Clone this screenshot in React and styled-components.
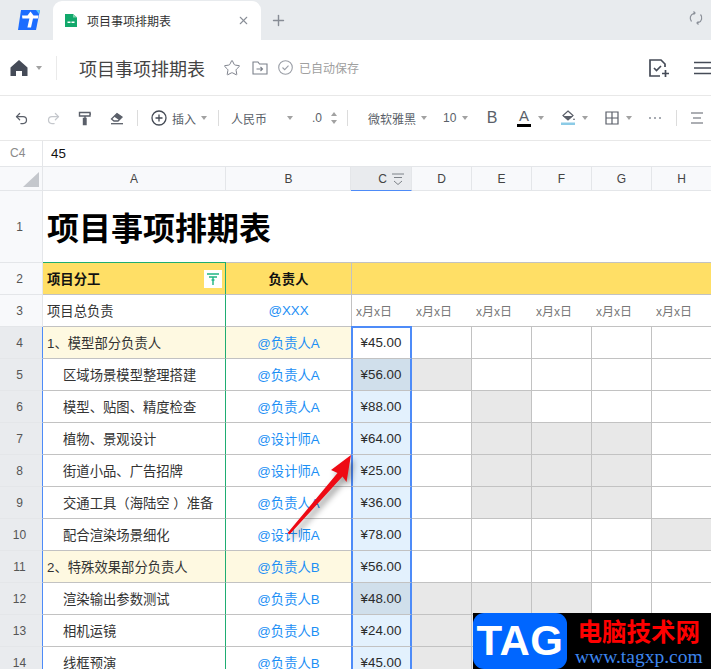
import React from 'react';
import styled, { createGlobalStyle } from 'styled-components';
import { Star, X, Plus, Undo2, Redo2 } from 'lucide-react';

const GlobalStyle = createGlobalStyle`
  html, body { margin: 0; padding: 0; background: #fff; }
  body { font-family: "Liberation Sans", "Noto Sans CJK SC", sans-serif; }
  * { box-sizing: border-box; }
`;

const Page = styled.div`
  position: relative;
  width: 711px;
  height: 669px;
  overflow: hidden;
  background: #fff;
`;

/* tab strip */
const TabStrip = styled.div`
  display: flex;
  align-items: flex-end;
  height: 40px;
  padding-left: 17px;
  background: #e8ebee;
`;
const Logo = styled.svg`
  align-self: center;
  width: 24px;
  height: 22px;
  margin-right: 12px;
  flex: none;
`;
const Tab = styled.div`
  display: flex;
  align-items: center;
  width: 208px;
  height: 39px;
  padding: 0 11px;
  gap: 9px;
  background: #fff;
  border-radius: 9px 9px 0 0;
  font-size: 12px;
  color: #333;
`;
const TabTitle = styled.span`
  flex: 1;
`;
const NewTab = styled.div`
  display: flex;
  align-self: center;
  margin-left: 9px;
  color: #878c95;
`;
const SyncIcon = styled.svg`
  align-self: center;
  margin-left: auto;
  margin-right: 8px;
  margin-top: -4px;
`;

/* document header */
const DocHeader = styled.div`
  display: flex;
  align-items: center;
  height: 56px;
  padding-left: 10px;
  border-bottom: 1px solid #e8e8e8;
`;
const HeadDivider = styled.div`
  width: 1px;
  height: 24px;
  margin: 0 22px 0 14px;
  background: #eaeaea;
`;
const DocTitle = styled.div`
  font-size: 18px;
  color: #444;
  margin-right: 18px;
`;
const SavedText = styled.span`
  font-size: 12px;
  color: #a0a0a0;
  margin-left: 6px;
`;
const HeadIcon = styled.svg`
  flex: none;
  margin-right: ${p => p.$gap || 0}px;
  margin-left: ${p => p.$left || 0}px;
`;

/* toolbar */
const Toolbar = styled.div`
  display: flex;
  align-items: center;
  height: 44px;
  padding-left: 5px;
  font-size: 12px;
  color: #444;
`;
const ToolButton = styled.div`
  display: flex;
  align-items: center;
  justify-content: ${p => (p.$start ? 'flex-start' : 'center')};
  flex: none;
  width: ${p => p.$w || 32}px;
  height: 24px;
  padding-left: ${p => p.$pad || 0}px;
  gap: ${p => p.$gap || 0}px;
  color: ${p => p.$color || '#5a5f69'};
`;
const ToolDivider = styled.div`
  flex: none;
  width: 1px;
  height: 16px;
  margin: 0 ${p => p.$m ?? 4}px;
  background: #dcdcdc;
`;
const Caret = styled.i`
  flex: none;
  width: 0;
  height: 0;
  margin-left: ${p => p.$left || 0}px;
  border-left: 3.5px solid transparent;
  border-right: 3.5px solid transparent;
  border-top: 4px solid #a2a2a2;
`;
const Stepper = styled.div`
  display: flex;
  flex-direction: column;
  gap: 4px;
  margin-left: 9px;
`;
const StepUp = styled.i`
  border-left: 3.5px solid transparent;
  border-right: 3.5px solid transparent;
  border-bottom: 4px solid #a2a2a2;
`;
const StepDown = styled.i`
  border-left: 3.5px solid transparent;
  border-right: 3.5px solid transparent;
  border-top: 4px solid #a2a2a2;
`;
const BoldMark = styled.span`
  font-size: 16px;
  color: #5a5f69;
`;
const ColorMark = styled.div`
  display: flex;
  flex-direction: column;
  align-items: center;
  width: 14px;
  font-size: 15px;
  line-height: 14px;
  color: #5a5f69;
  &::after {
    content: '';
    width: 14px;
    height: 3px;
    margin-top: 1px;
    background: ${p => p.$bar};
  }
`;

/* formula bar */
const FormulaBar = styled.div`
  display: flex;
  align-items: center;
  height: 27px;
  border-top: 1px solid #e8e8e8;
  border-bottom: 1px solid #e4e6e9;
`;
const CellRef = styled.div`
  width: 43px;
  height: 100%;
  padding-left: 10px;
  border-right: 1px solid #e4e6e9;
  font-size: 12px;
  line-height: 25px;
  color: #8a8a8a;
`;
const FormulaValue = styled.div`
  padding-left: 8px;
  font-size: 13.33px;
  color: #111;
`;

/* sheet */
const Row = styled.div`
  display: grid;
  grid-template-columns: 43px 183px 125px 61px repeat(5, 60px);
  height: ${p => p.$h || 32}px;
`;
const Corner = styled.div`
  display: flex;
  align-items: flex-end;
  justify-content: flex-end;
  padding: 0 3px 3px 0;
  background: #f8f9fb;
  border-right: 1px solid #e4e6e9;
  border-bottom: 1px solid #e4e6e9;
`;
const ColHead = styled.div`
  display: flex;
  align-items: center;
  justify-content: center;
  gap: 4px;
  font-size: 12px;
  color: #444;
  background: ${p => (p.$active ? '#e9ebee' : '#f8f9fb')};
  border-right: 1px solid #e4e6e9;
  border-bottom: ${p => (p.$active ? '1px solid #4d8bf8' : '1px solid #e4e6e9')};
  padding-left: ${p => p.$pad || 0}px;
`;
const RowHead = styled.div`
  display: flex;
  align-items: center;
  justify-content: center;
  padding-right: 3px;
  font-size: 12px;
  color: #555;
  background: ${p => (p.$active ? '#e9ebee' : '#f8f9fb')};
  border-right: 1px solid ${p => (p.$active ? '#4d8bf8' : '#e4e6e9')};
  border-bottom: 1px solid #e4e6e9;
`;
const TitleCell = styled.div`
  display: flex;
  align-items: center;
  padding: 0 0 2px 4px;
  font-size: 32px;
  font-weight: 700;
  color: #000;
  white-space: nowrap;
  border-bottom: 1px solid #1fad72;
`;
const TitleRest = styled.div`
  grid-column: 3 / -1;
  border-bottom: 1px solid #c2c2c2;
`;
const NameCell = styled.div`
  display: flex;
  align-items: center;
  justify-content: space-between;
  padding-left: ${p => (p.$indent ? 20 : 4)}px;
  padding-right: 3px;
  font-size: 13.33px;
  font-weight: ${p => (p.$bold ? 700 : 400)};
  color: ${p => (p.$bold ? '#111' : '#333')};
  white-space: nowrap;
  background: ${p => p.$bg || '#fff'};
  border-right: 1px solid #1fad72;
  border-bottom: 1px solid #c2c2c2;
`;
const OwnerCell = styled.div`
  display: flex;
  align-items: center;
  justify-content: center;
  font-size: 13.33px;
  font-weight: ${p => (p.$bold ? 700 : 400)};
  color: ${p => (p.$bold ? '#111' : '#1c8ff5')};
  background: ${p => p.$bg || '#fff'};
  border-bottom: 1px solid #c2c2c2;
`;
const BandCell = styled.div`
  grid-column: 4 / -1;
  background: #ffdf66;
  border-left: 1px solid #c2c2c2;
  border-bottom: 1px solid #c2c2c2;
`;
const DateCell = styled.div`
  display: flex;
  align-items: center;
  padding-left: 4px;
  font-size: 12px;
  color: #777;
  white-space: nowrap;
  border-left: ${p => (p.$first ? '1px solid #c2c2c2' : 'none')};
  border-bottom: 1px solid #c2c2c2;
`;
const AmountCell = styled.div`
  display: flex;
  align-items: center;
  justify-content: center;
  padding-right: 1px;
  font-size: 13.33px;
  color: #2b2b2b;
  background: ${p => (p.$current ? '#fff' : p.$dark ? '#d0dfeb' : '#e3f1fd')};
  border-left: 2px solid #4d8bf8;
  border-right: 2px solid #4d8bf8;
  border-bottom: 1px solid #c2c2c2;
  box-shadow: ${p => (p.$current ? 'inset 0 2px 0 #4d8bf8' : 'none')};
  margin-top: ${p => (p.$current ? -1 : 0)}px;
`;
const DayCell = styled.div`
  background: ${p => (p.$on ? '#e8e8e8' : '#fff')};
  border-right: 1px solid #c2c2c2;
  border-bottom: 1px solid #c2c2c2;
`;
const FilterButton = styled.div`
  display: flex;
  align-items: center;
  justify-content: center;
  width: 18px;
  height: 18px;
  background: #fff;
`;

/* annotation drawn over the sheet */
const ArrowMark = styled.svg`
  position: absolute;
  left: 270px;
  top: 445px;
  filter: drop-shadow(3px 4px 3px rgba(0, 0, 0, 0.4));
`;
const Watermark = styled.div`
  position: absolute;
  left: 473px;
  top: 613px;
  display: flex;
  width: 238px;
  height: 56px;
  background: #000;
`;
const WatermarkBadge = styled.div`
  display: flex;
  align-items: center;
  justify-content: center;
  width: 94px;
  height: 56px;
  border-radius: 11px;
  background: #0066ff;
  color: #fff;
  font-size: 42px;
  font-weight: 700;
  letter-spacing: 0.5px;
`;
const WatermarkText = styled.div`
  display: flex;
  flex-direction: column;
  align-items: center;
  padding-left: 8px;
`;
const WatermarkName = styled.div`
  margin-top: 2px;
  font-family: "Noto Sans CJK SC", sans-serif;
  font-size: 24.5px;
  line-height: 32px;
  font-weight: 700;
  color: #f00;
`;
const WatermarkUrl = styled.div`
  font-family: "Liberation Serif", serif;
  font-size: 19.5px;
  line-height: 20px;
  color: #3d86ee;
`;

const Roller = () => (
  <svg width="16" height="16" viewBox="0 0 16 16" fill="none" stroke="currentColor" strokeWidth="1.4">
    <path d="M2.5 2.5h10.500v3.500h-10.500z" />
    <path d="M13 4h1v0M8 6v2" />
    <path d="M6.500 8.500h2.500v6h-2.500z" fill="currentColor" />
  </svg>
);
const Eraser = () => (
  <svg width="16" height="16" viewBox="0 0 16 16" fill="none">
    <path d="M2.500 9l5.500-5.500 5 3.500-4 4h-4z" stroke="currentColor" strokeWidth="1.300" />
    <path d="M8 3.500l5 3.500-3 3-5-3.500z" fill="currentColor" />
    <path d="M2 13.700h12" stroke="currentColor" strokeWidth="1.300" />
  </svg>
);
const PlusCircle = () => (
  <svg width="16" height="16" viewBox="0 0 16 16" fill="none" stroke="#444a55" strokeWidth="1.300">
    <circle cx="8" cy="8" r="7" />
    <path d="M8 4.500v7M4.500 8h7" />
  </svg>
);
const Fill = () => (
  <svg width="16" height="17" viewBox="0 0 16 17">
    <path d="M8 1l5 4.500-5 4.500-5-4.500z" fill="none" stroke="#5a5f69" strokeWidth="1.200" />
    <path d="M3 6h10l-5 4z" fill="#5a5f69" />
    <path d="M14 8l1 2h-2z" fill="#5a5f69" />
    <path d="M1 12.500h14v2.500h-14z" fill="#8ccbe6" />
  </svg>
);
const Borders = () => (
  <svg width="14" height="14" viewBox="0 0 14 14" fill="none" stroke="#5a5f69" strokeWidth="1.200">
    <path d="M1 1h12v12h-12zM7 1v12M1 7h12" />
  </svg>
);
const Dots = () => (
  <svg width="14" height="4" viewBox="0 0 14 4" fill="#8a8f98">
    <circle cx="2" cy="2" r="1" />
    <circle cx="7" cy="2" r="1" />
    <circle cx="12" cy="2" r="1" />
  </svg>
);
const AlignMiddle = () => (
  <svg width="14" height="12" viewBox="0 0 14 12" stroke="#5a5f69" strokeWidth="1.200">
    <path d="M1 1h12M3 6h8M1 11h12" />
  </svg>
);
const SortMark = () => (
  <svg width="14" height="14" viewBox="0 0 14 14" fill="none" stroke="#7d8288" strokeWidth="1">
    <path d="M1 2h12M3 5.500h8M3 9l4 3.500 4-3.500" />
  </svg>
);
const FunnelMark = () => (
  <svg width="14" height="14" viewBox="0 0 14 14" fill="none" stroke="#1fb583" strokeWidth="1.400">
    <path d="M1 2h12M3 5h8M7 5v8" />
    <path d="M5.500 8h3" />
  </svg>
);

const dates = Array(6).fill('x月x日');
const letters = ['D', 'E', 'F', 'G', 'H'];

const rows = [
  { n: 4, name: '1、模型部分负责人', owner: '@负责人A', amount: '¥45.00', group: true, current: true, days: [] },
  { n: 5, name: '区域场景模型整理搭建', owner: '@负责人A', amount: '¥56.00', dark: true, days: [0] },
  { n: 6, name: '模型、贴图、精度检查', owner: '@负责人A', amount: '¥88.00', days: [1] },
  { n: 7, name: '植物、景观设计', owner: '@设计师A', amount: '¥64.00', days: [1, 2, 3] },
  { n: 8, name: '街道小品、广告招牌', owner: '@设计师A', amount: '¥25.00', days: [1, 2, 3] },
  { n: 9, name: '交通工具（海陆空 ）准备', owner: '@负责人A', amount: '¥36.00', days: [1, 2, 3] },
  { n: 10, name: '配合渲染场景细化', owner: '@设计师A', amount: '¥78.00', days: [4] },
  { n: 11, name: '2、特殊效果部分负责人', owner: '@负责人B', amount: '¥56.00', group: true, days: [] },
  { n: 12, name: '渲染输出参数测试', owner: '@负责人B', amount: '¥48.00', dark: true, days: [0, 1, 2] },
  { n: 13, name: '相机运镜', owner: '@负责人B', amount: '¥24.00', days: [0, 1, 2] },
  { n: 14, name: '线框预演', owner: '@负责人B', amount: '¥45.00', days: [0, 1, 2] },
];

export default function App() {
  return (
    <Page>
      <GlobalStyle />
      <TabStrip>
        <Logo viewBox="0 0 24 22">
          <path d="M4 1h19l-4 20h-18z" fill="#1c6dff" />
          <path d="M19 1h4l-1 4z" fill="#5cc8f5" />
          <path d="M5 6.500h5.500l3-4 3 4h5l-.6 3h-4.900l-2 9h-3.600l2-9h-7z" fill="#fff" />
        </Logo>
        <Tab>
          <svg width="14" height="15" viewBox="0 0 14 15">
            <path d="M1 1h8l4 3.500v9.500h-12z" fill="#12a86b" />
            <path d="M9 1l4 3.500h-4z" fill="#7ed2ac" />
            <path d="M3.500 8.500h3v1.500h-3zM7.500 8.500h3v1.500h-3z" fill="#fff" />
          </svg>
          <TabTitle>项目事项排期表</TabTitle>
          <X size={13} color="#8a8f98" />
        </Tab>
        <NewTab><Plus size={17} strokeWidth={2} /></NewTab>
        <SyncIcon width="14" height="14" viewBox="0 0 14 14" fill="none" stroke="#8a8f98" strokeWidth="1.200">
          <path d="M2.500 10.500a5 5 0 0 1 2-8l1.500-.5M11.500 3.500a5 5 0 0 1-2 8l-1.500.5" />
          <path d="M4.500 0.500l1.500 1.500-1.500 1.500M9.500 10.500l-1.500 1.500 1.500 1.500" />
        </SyncIcon>
      </TabStrip>

      <DocHeader>
        <HeadIcon width="18" height="18" viewBox="0 0 18 18" $gap={8}>
          <path d="M9 1l8.500 7.500v8.500h-5.500v-5h-6v5h-5.500v-8.500z" fill="#454b57" />
        </HeadIcon>
        <Caret />
        <HeadDivider />
        <DocTitle>项目事项排期表</DocTitle>
        <Star size={18} color="#7b808a" strokeWidth={1.300} />
        <HeadIcon width="16" height="14" viewBox="0 0 16 14" fill="none" stroke="#7b808a" strokeWidth="1.100" $left={11} $gap={10}>
          <path d="M1 1h5l1.500 2h7.500v10h-14zM4.500 8h6M8.500 6l2 2-2 2" />
        </HeadIcon>
        <HeadIcon width="15" height="15" viewBox="0 0 15 15" fill="none" stroke="#9a9ea6" strokeWidth="1.100">
          <circle cx="7.500" cy="7.500" r="6.800" />
          <path d="M4.500 7.500l2.200 2.200 3.800-4" />
        </HeadIcon>
        <SavedText>已自动保存</SavedText>
        <HeadIcon width="22" height="20" viewBox="0 0 22 20" fill="none" stroke="#454b57" strokeWidth="1.700" $left={289}>
          <path d="M12 18h-10v-16h11l4 4v3" />
          <path d="M6 10l2.500 2.500 4.500-4.500M14 15.500h7M17.500 12v7" />
        </HeadIcon>
        <HeadIcon width="17" height="14" viewBox="0 0 17 14" stroke="#454b57" strokeWidth="1.700" $left={24}>
          <path d="M0 1.500h17M0 7h17M0 12.500h17" />
        </HeadIcon>
      </DocHeader>

      <Toolbar>
        <ToolButton><Undo2 size={15} /></ToolButton>
        <ToolButton $color="#c4c7cc"><Redo2 size={15} /></ToolButton>
        <ToolButton><Roller /></ToolButton>
        <ToolButton><Eraser /></ToolButton>
        <ToolDivider />
        <ToolButton $w={72} $pad={9} $gap={5} $start>
          <PlusCircle />
          <span>插入</span>
          <Caret $left={0} />
        </ToolButton>
        <ToolDivider />
        <ToolButton $w={77} $pad={8} $start>
          <span>人民币</span>
          <Caret $left={20} />
        </ToolButton>
        <ToolButton $w={47} $pad={12} $start>
          <span>.0</span>
          <Stepper><StepUp /><StepDown /></Stepper>
        </ToolButton>
        <ToolDivider $m={0} />
        <ToolButton $w={85} $pad={20} $gap={5} $start>
          <span>微软雅黑</span>
          <Caret />
        </ToolButton>
        <ToolButton $w={39} $pad={10} $gap={6} $start>
          <span>10</span>
          <Caret />
        </ToolButton>
        <ToolButton $w={40}><BoldMark>B</BoldMark></ToolButton>
        <ToolButton $w={44} $pad={5} $gap={7} $start>
          <ColorMark $bar="#000">A</ColorMark>
          <Caret />
        </ToolButton>
        <ToolButton $w={44} $pad={4} $gap={6} $start>
          <Fill />
          <Caret />
        </ToolButton>
        <ToolButton $w={44} $pad={5} $gap={7} $start>
          <Borders />
          <Caret />
        </ToolButton>
        <ToolButton $w={22}><Dots /></ToolButton>
        <ToolDivider $m={10} />
        <ToolButton $w={20}><AlignMiddle /></ToolButton>
      </Toolbar>

      <FormulaBar>
        <CellRef>C4</CellRef>
        <FormulaValue>45</FormulaValue>
      </FormulaBar>

      <Row $h={24}>
        <Corner>
          <svg width="16" height="15" viewBox="0 0 16 15"><path d="M16 0v15h-16z" fill="#c4c7cc" /></svg>
        </Corner>
        <ColHead>A</ColHead>
        <ColHead $pad={1}>B</ColHead>
        <ColHead $active $pad={21}>C<SortMark /></ColHead>
        {letters.map(l => <ColHead key={l}>{l}</ColHead>)}
      </Row>

      <Row $h={72}>
        <RowHead>1</RowHead>
        <TitleCell>项目事项排期表</TitleCell>
        <TitleRest />
      </Row>

      <Row>
        <RowHead>2</RowHead>
        <NameCell $bold $bg="#ffdf66">
          项目分工
          <FilterButton><FunnelMark /></FilterButton>
        </NameCell>
        <OwnerCell $bold $bg="#ffdf66">负责人</OwnerCell>
        <BandCell />
      </Row>

      <Row>
        <RowHead>3</RowHead>
        <NameCell>项目总负责</NameCell>
        <OwnerCell>@XXX</OwnerCell>
        {dates.map((d, i) => <DateCell key={i} $first={i === 0}>{d}</DateCell>)}
      </Row>

      {rows.map(r => (
        <Row key={r.n}>
          <RowHead $active>{r.n}</RowHead>
          <NameCell $indent={!r.group} $bg={r.group ? '#fef9e1' : undefined}>{r.name}</NameCell>
          <OwnerCell $bg={r.group ? '#fef9e1' : undefined}>{r.owner}</OwnerCell>
          <AmountCell $current={r.current} $dark={r.dark}>{r.amount}</AmountCell>
          {letters.map((l, i) => <DayCell key={l} $on={r.days.includes(i)} />)}
        </Row>
      ))}

      <ArrowMark width="90" height="95" viewBox="0 0 90 95">
        <path d="M81 10l-20 15 6.500 3-50 60 2 1.500 53-58 4 5.500z" fill="#ee0a14" />
      </ArrowMark>

      <Watermark>
        <WatermarkBadge>TAG</WatermarkBadge>
        <WatermarkText>
          <WatermarkName>电脑技术网</WatermarkName>
          <WatermarkUrl>www.tagxp.com</WatermarkUrl>
        </WatermarkText>
      </Watermark>
    </Page>
  );
}
